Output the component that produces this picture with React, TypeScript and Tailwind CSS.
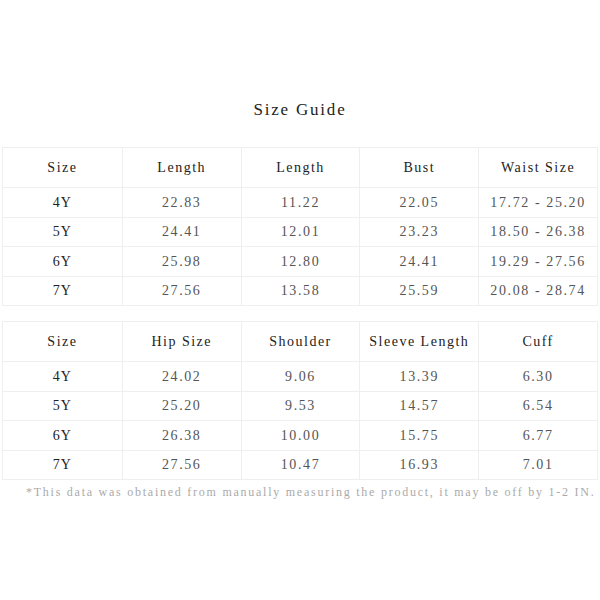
const tableOne = {
  headers: ["Size", "Length", "Length", "Bust", "Waist Size"],
  rows: [
    ["4Y", "22.83", "11.22", "22.05", "17.72 - 25.20"],
    ["5Y", "24.41", "12.01", "23.23", "18.50 - 26.38"],
    ["6Y", "25.98", "12.80", "24.41", "19.29 - 27.56"],
    ["7Y", "27.56", "13.58", "25.59", "20.08 - 28.74"],
  ],
};

const tableTwo = {
  headers: ["Size", "Hip Size", "Shoulder", "Sleeve Length", "Cuff"],
  rows: [
    ["4Y", "24.02", "9.06", "13.39", "6.30"],
    ["5Y", "25.20", "9.53", "14.57", "6.54"],
    ["6Y", "26.38", "10.00", "15.75", "6.77"],
    ["7Y", "27.56", "10.47", "16.93", "7.01"],
  ],
};

function SizeTable({ headers, rows }: { headers: string[]; rows: string[][] }) {
  return (
    <div className="mx-[2px] border border-[#efefef]">
      <div className="grid grid-cols-5 h-[39px]">
        {headers.map((h, i) => (
          <div
            key={i}
            className={`flex items-center justify-center text-[14px] tracking-[1.5px] text-[#222] ${
              i > 0 ? "border-l border-[#efefef]" : ""
            }`}
          >
            {h}
          </div>
        ))}
      </div>
      {rows.map((row, r) => (
        <div key={r} className="grid grid-cols-5 h-[29.5px] border-t border-[#efefef]">
          {row.map((cell, i) => (
            <div
              key={i}
              className={`flex items-center justify-center ${
                i === 0
                  ? "text-[14px] tracking-[1px] text-[#222]"
                  : "text-[14px] tracking-[1.6px] text-[#555] border-l border-[#efefef]"
              }`}
            >
              {cell}
            </div>
          ))}
        </div>
      ))}
    </div>
  );
}

export default function App() {
  return (
    <div className="w-[600px] h-[600px] bg-white font-['Liberation_Serif',serif]">
      <div className="pt-[99px] text-center text-[17px] tracking-[1.8px] leading-[22px] text-[#222]">
        Size Guide
      </div>
      <div className="mt-[26px]">
        <SizeTable {...tableOne} />
      </div>
      <div className="mt-[15px]">
        <SizeTable {...tableTwo} />
      </div>
      <p className="mt-[3px] pl-[26px] text-left text-[12px] tracking-[1.75px] text-[#aaa] whitespace-nowrap">
        *This data was obtained from manually measuring the product, it may be off by 1-2 IN.
      </p>
    </div>
  );
}
